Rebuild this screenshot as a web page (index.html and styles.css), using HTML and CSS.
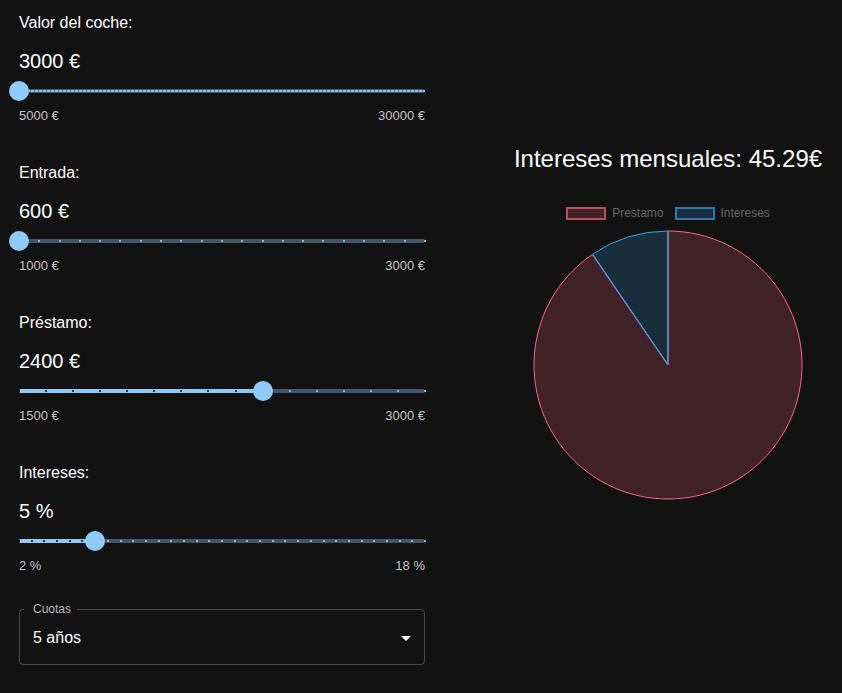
FILE: index.html
```html
<!DOCTYPE html>
<html lang="es">
<head>
<meta charset="utf-8">
<title>Calculadora</title>
<link rel="stylesheet" href="styles.css">
</head>
<body>
<div class="page">
  <div class="controls">
    <div class="field">
      <div class="label">Valor del coche:</div>
      <div class="value">3000 €</div>
      <div class="slider">
        <div class="rail">
          <div class="dense"></div>
          <div class="thumb" style="left:0%"></div>
        </div>
      </div>
      <div class="ends"><span>5000 €</span><span>30000 €</span></div>
    </div>

    <div class="field">
      <div class="label">Entrada:</div>
      <div class="value">600 €</div>
      <div class="slider">
        <div class="rail">
          <div class="marks">
            <i class="m"></i><i class="m"></i><i class="m"></i><i class="m"></i><i class="m"></i><i class="m"></i><i class="m"></i>
            <i class="m"></i><i class="m"></i><i class="m"></i><i class="m"></i><i class="m"></i><i class="m"></i><i class="m"></i>
            <i class="m"></i><i class="m"></i><i class="m"></i><i class="m"></i><i class="m"></i><i class="m"></i><i class="m"></i>
          </div>
          <div class="thumb" style="left:0%"></div>
        </div>
      </div>
      <div class="ends"><span>1000 €</span><span>3000 €</span></div>
    </div>

    <div class="field">
      <div class="label">Préstamo:</div>
      <div class="value">2400 €</div>
      <div class="slider">
        <div class="rail">
          <div class="track" style="width:60%"></div>
          <div class="marks">
            <i class="m on"></i><i class="m on"></i><i class="m on"></i><i class="m on"></i><i class="m on"></i><i class="m on"></i><i class="m on"></i><i class="m on"></i>
            <i class="m on"></i><i class="m on"></i><i class="m"></i><i class="m"></i><i class="m"></i><i class="m"></i><i class="m"></i><i class="m"></i>
          </div>
          <div class="thumb" style="left:60%"></div>
        </div>
      </div>
      <div class="ends"><span>1500 €</span><span>3000 €</span></div>
    </div>

    <div class="field">
      <div class="label">Intereses:</div>
      <div class="value">5 %</div>
      <div class="slider">
        <div class="rail">
          <div class="track" style="width:18.75%"></div>
          <div class="marks">
            <i class="m on"></i><i class="m on"></i><i class="m on"></i><i class="m on"></i><i class="m on"></i><i class="m on"></i><i class="m on"></i>
            <i class="m"></i><i class="m"></i><i class="m"></i><i class="m"></i><i class="m"></i><i class="m"></i><i class="m"></i><i class="m"></i>
            <i class="m"></i><i class="m"></i><i class="m"></i><i class="m"></i><i class="m"></i><i class="m"></i><i class="m"></i><i class="m"></i>
            <i class="m"></i><i class="m"></i><i class="m"></i><i class="m"></i><i class="m"></i><i class="m"></i><i class="m"></i><i class="m"></i>
            <i class="m"></i><i class="m"></i>
          </div>
          <div class="thumb" style="left:18.75%"></div>
        </div>
      </div>
      <div class="ends"><span>2 %</span><span>18 %</span></div>
    </div>

    <div class="select">
      <span class="select-label">Cuotas</span>
      <span class="select-value">5 años</span>
      <svg class="caret" width="24" height="24" viewBox="0 0 24 24"><path d="M7 10l5 5 5-5z" fill="#fff"/></svg>
    </div>
  </div>

  <div class="chart">
    <h2 class="title">Intereses mensuales: 45.29€</h2>
    <div class="legend">
      <span class="box box-loan"></span><span class="legend-text">Prestamo</span>
      <span class="box box-int"></span><span class="legend-text">Intereses</span>
    </div>
    <svg class="pie" width="348" height="272" viewBox="0 0 348 272">
      <path d="M174 135 L174 1 A134 134 0 1 1 98.5 24.3 Z" fill="rgba(255,99,132,0.2)" stroke="rgb(255,99,132)" stroke-width="1"/>
      <path d="M174 135 L98.5 24.3 A134 134 0 0 1 174 1 Z" fill="rgba(54,162,235,0.2)" stroke="rgb(54,162,235)" stroke-width="1"/>
      <line x1="174" y1="135" x2="174" y2="1" stroke="#6b82bd" stroke-width="1.2"/>
      <line x1="174" y1="135" x2="98.5" y2="24.3" stroke="#5a8fd0" stroke-width="1.2"/>
    </svg>
  </div>
</div>
</body>
</html>
```

FILE: styles.css
```css
* { box-sizing: border-box; }

html, body {
  margin: 0;
  padding: 0;
  background: #121212;
  color: #fff;
  font-family: "Liberation Sans", Arial, sans-serif;
}

.page {
  display: flex;
  width: 842px;
  height: 693px;
}

.controls {
  width: 406px;
  margin-left: 19px;
}

.field {
  height: 150px;
  padding-top: 14px;
}

.label {
  font-size: 16px;
  line-height: 18px;
}

.value {
  font-size: 20px;
  line-height: 24px;
  margin-top: 17px;
}

.slider {
  height: 20px;
  margin-top: 8px;
  display: flex;
  align-items: center;
}

.rail {
  position: relative;
  flex: 1;
  height: 4px;
  border-radius: 2px;
  background: #42586a;
}

.track {
  position: absolute;
  left: 0;
  top: 0;
  bottom: 0;
  border-radius: 2px;
  background: #90caf9;
}

.marks {
  position: absolute;
  top: 0;
  bottom: 0;
  left: -1px;
  right: -1px;
  display: flex;
  justify-content: space-between;
  align-items: center;
}

.m {
  display: block;
  width: 2px;
  height: 2px;
  background: rgba(144, 202, 249, 0.85);
}

.m.on {
  background: rgba(18, 18, 18, 0.8);
}

.dense {
  position: absolute;
  left: 0;
  right: 0;
  top: 1px;
  height: 2px;
  background: repeating-linear-gradient(90deg, #86bce8 0 3px, #5f86a8 3px 4px);
}

.thumb {
  position: absolute;
  top: 50%;
  width: 20px;
  height: 20px;
  border-radius: 50%;
  background: #90caf9;
  transform: translate(-50%, -50%);
}

.ends {
  display: flex;
  justify-content: space-between;
  margin-top: 7px;
  font-size: 13px;
  line-height: 15px;
  color: #c4c4c4;
}

.select {
  position: relative;
  margin-top: 9px;
  height: 56px;
  border: 1px solid rgba(255, 255, 255, 0.23);
  border-radius: 4px;
  display: flex;
  align-items: center;
  justify-content: space-between;
  padding: 0 6px 0 13px;
}

.select-label {
  position: absolute;
  top: -8px;
  left: 4px;
  padding: 0 6px 0 9px;
  background: #121212;
  font-size: 12px;
  line-height: 15px;
  color: rgba(255, 255, 255, 0.7);
}

.select-value {
  font-size: 16px;
  line-height: 19px;
}

.caret {
  display: block;
  margin-top: 2px;
}

.chart {
  width: 348px;
  margin-left: 69px;
  padding-top: 145px;
  display: flex;
  flex-direction: column;
  align-items: center;
}

.title {
  margin: 0;
  font-size: 24px;
  line-height: 28px;
  font-weight: normal;
  text-align: center;
}

.legend {
  margin-top: 34px;
  height: 13px;
  display: flex;
  align-items: center;
  font-size: 12px;
  color: #666;
}

.box {
  width: 40px;
  height: 13px;
  margin-right: 6px;
}

.box-loan {
  background: rgba(255, 99, 132, 0.2);
  border: 2px solid rgba(255, 99, 132, 0.65);
}

.box-int {
  margin-left: 11px;
  background: rgba(54, 162, 235, 0.2);
  border: 2px solid rgba(54, 162, 235, 0.65);
}

.legend-text {
  line-height: 13px;
}

.pie {
  display: block;
  margin-top: 10px;
}
```
